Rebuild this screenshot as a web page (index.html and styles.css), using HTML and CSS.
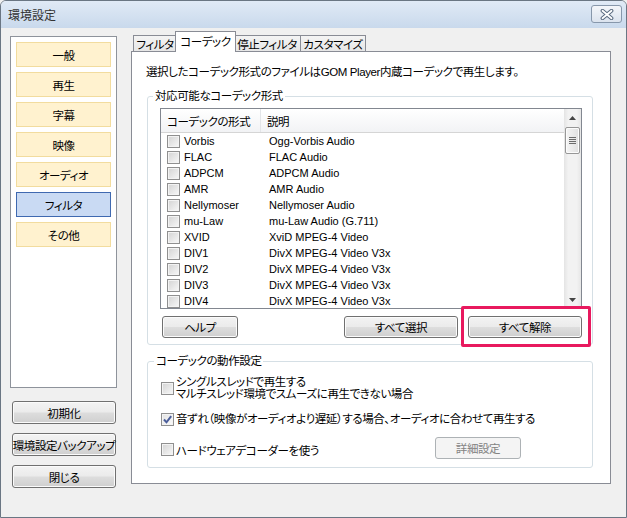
FILE: index.html
```html
<!DOCTYPE html>
<html lang="ja">
<head>
<meta charset="utf-8">
<title>環境設定</title>
<link rel="stylesheet" href="styles.css">
</head>
<body>
<div class="window">
  <div class="titlebar">
    <span class="title">環境設定</span>
    <div class="close">
      <svg width="16" height="11" viewBox="0 0 16 11"><path d="M3.5 1.8 L12.5 9.2 M12.5 1.8 L3.5 9.2" stroke="#5a6b80" stroke-width="3.8" stroke-linecap="round"/><path d="M3.5 1.8 L12.5 9.2 M12.5 1.8 L3.5 9.2" stroke="#ffffff" stroke-width="1.8" stroke-linecap="round"/></svg>
    </div>
  </div>
  <div class="client">
    <div class="side">
      <nav class="navpanel">
        <div class="nav">一般</div>
        <div class="nav">再生</div>
        <div class="nav">字幕</div>
        <div class="nav">映像</div>
        <div class="nav">オーディオ</div>
        <div class="nav nav-active">フィルタ</div>
        <div class="nav">その他</div>
      </nav>
      <div class="sidebtns">
        <div class="btn side-btn">初期化</div>
        <div class="btn side-btn">環境設定バックアップ</div>
        <div class="btn side-btn">閉じる</div>
      </div>
    </div>
    <div class="main">
      <div class="tabs">
        <div class="tab tab-1">フィルタ</div>
        <div class="tab tab-active">コーデック</div>
        <div class="tab tab-3">停止フィルタ</div>
        <div class="tab tab-4">カスタマイズ</div>
      </div>
      <div class="tabpanel">
        <p class="desc">選択したコーデック形式のファイルはGOM Player内蔵コーデックで再生します。</p>
        <fieldset class="group group-codecs">
          <legend>対応可能なコーデック形式</legend>
          <div class="list">
            <div class="list-body">
              <div class="list-head"><div class="col1">コーデックの形式</div><div class="col2">説明</div></div>
              <div class="row"><div class="col1"><span class="cb"></span>Vorbis</div><div class="col2">Ogg-Vorbis Audio</div></div>
              <div class="row"><div class="col1"><span class="cb"></span>FLAC</div><div class="col2">FLAC Audio</div></div>
              <div class="row"><div class="col1"><span class="cb"></span>ADPCM</div><div class="col2">ADPCM Audio</div></div>
              <div class="row"><div class="col1"><span class="cb"></span>AMR</div><div class="col2">AMR Audio</div></div>
              <div class="row"><div class="col1"><span class="cb"></span>Nellymoser</div><div class="col2">Nellymoser Audio</div></div>
              <div class="row"><div class="col1"><span class="cb"></span>mu-Law</div><div class="col2">mu-Law Audio (G.711)</div></div>
              <div class="row"><div class="col1"><span class="cb"></span>XVID</div><div class="col2">XviD MPEG-4 Video</div></div>
              <div class="row"><div class="col1"><span class="cb"></span>DIV1</div><div class="col2">DivX MPEG-4 Video V3x</div></div>
              <div class="row"><div class="col1"><span class="cb"></span>DIV2</div><div class="col2">DivX MPEG-4 Video V3x</div></div>
              <div class="row"><div class="col1"><span class="cb"></span>DIV3</div><div class="col2">DivX MPEG-4 Video V3x</div></div>
              <div class="row"><div class="col1"><span class="cb"></span>DIV4</div><div class="col2">DivX MPEG-4 Video V3x</div></div>
            </div>
            <div class="scrollbar">
              <div class="sb-arrow"><svg width="7" height="4" viewBox="0 0 7 4"><polygon points="0,4 3.5,0 7,4" fill="#444"/></svg></div>
              <div class="sb-thumb"><svg width="7" height="7" viewBox="0 0 7 7"><path d="M0 0.5H7M0 2.5H7M0 4.5H7M0 6.5H7" stroke="#6b6b6b" stroke-width="1"/></svg></div>
              <div class="sb-track"></div>
              <div class="sb-arrow"><svg width="7" height="4" viewBox="0 0 7 4"><polygon points="0,0 7,0 3.5,4" fill="#444"/></svg></div>
            </div>
          </div>
          <div class="list-btns">
            <div class="btn btn-help">ヘルプ</div>
            <div class="btn btn-wide">すべて選択</div>
            <div class="btn btn-wide btn-marked">すべて解除<span class="highlight"></span></div>
          </div>
        </fieldset>
        <fieldset class="group group-opts">
          <legend>コーデックの動作設定</legend>
          <div class="opt opt-multi">
            <span class="cb"></span>
            <span class="opt-text">シングルスレッドで再生する<br>マルチスレッド環境でスムーズに再生できない場合</span>
          </div>
          <div class="opt opt-single">
            <span class="cb cb-checked"><svg width="11" height="11" viewBox="0 0 11 11"><path d="M2 5.5 L4.5 8.3 L9.2 2.2" fill="none" stroke="#4a5d9a" stroke-width="2"/></svg></span>
            <span class="opt-text">音ずれ（映像がオーディオより遅延）する場合、オーディオに合わせて再生する</span>
          </div>
          <div class="opt-row">
            <div class="opt opt-hw">
              <span class="cb"></span>
              <span class="opt-text">ハードウェアデコーダーを使う</span>
            </div>
            <div class="btn btn-disabled">詳細設定</div>
          </div>
        </fieldset>
      </div>
    </div>
  </div>
</div>
</body>
</html>
```

FILE: styles.css
```css
* { box-sizing: border-box; }
html, body { margin: 0; padding: 0; }
body {
  width: 627px;
  height: 518px;
  overflow: hidden;
  background: #f0f0f0;
  font-family: "Liberation Sans", "Noto Sans CJK JP", sans-serif;
  font-size: 11.5px;
  letter-spacing: -0.4px;
  color: #000;
  font-feature-settings: "palt";
  white-space: nowrap;
}
.window {
  width: 627px;
  height: 518px;
  border: 1px solid #6a7683;
  border-radius: 6px 6px 0 0;
  background: #f0f0f0;
  display: flex;
  flex-direction: column;
}
.titlebar {
  height: 27px;
  flex: none;
  display: flex;
  align-items: center;
  justify-content: space-between;
  padding: 0 4px 0 7px;
  border-radius: 5px 5px 0 0;
  background: linear-gradient(#e0eaf6, #c9d9ec);
}
.title { font-size: 12px; letter-spacing: 0; color: #333; }
.close {
  width: 31px;
  height: 18px;
  border: 1px solid #8797ab;
  border-radius: 3px;
  background: linear-gradient(#f3f6fa, #dbe3ee);
  display: flex;
  align-items: center;
  justify-content: center;
  margin-top: -1px;
}
.client {
  flex: 1;
  display: flex;
  gap: 14px;
  padding: 3px 15px 0 9px;
}
.side { width: 107px; padding-top: 5px; display: flex; flex-direction: column; }
.navpanel {
  height: 352px;
  background: #fff;
  border: 1px solid #8e939b;
  padding: 5px 5px;
  display: flex;
  flex-direction: column;
  gap: 5px;
}
.nav {
  height: 25px;
  background: #fff2cf;
  border: 1px solid #f2dc9e;
  display: flex;
  align-items: center;
  justify-content: center;
}
.nav-active { background: #c9daf3; border-color: #3f69b0; }
.sidebtns { margin: 13px 0 0 2px; width: 104px; display: flex; flex-direction: column; gap: 9px; }
.side-btn { height: 23px; }
.btn {
  border: 1px solid #707070;
  border-radius: 3px;
  background: linear-gradient(#f3f3f3 0%, #ebebeb 48%, #dddddd 52%, #cfcfcf 100%);
  box-shadow: inset 0 0 0 1px #fbfbfb;
  display: flex;
  align-items: center;
  justify-content: center;
}
.main { width: 480px; display: flex; flex-direction: column; }
.tabs { height: 20px; display: flex; align-items: flex-end; padding-left: 2px; }
.tab {
  height: 16px;
  border: 1px solid #898c95;
  border-bottom: none;
  margin-left: -1px;
  background: linear-gradient(#f4f4f4, #e6e6e6);
  display: flex;
  align-items: center;
  justify-content: center;
  padding-top: 1px;
}
.tab-1 { width: 44px; margin-left: 0; }
.tab-active {
  width: 61px;
  height: 21px;
  margin: 0 -2px -1px -2px;
  background: #fff;
  position: relative;
  z-index: 1;
  padding-bottom: 4px;
}
.tab-3 { width: 68px; }
.tab-4 { width: 66px; }
.tabpanel {
  height: 433px;
  background: #fff;
  border: 1px solid #898c95;
}
.desc { margin: 13px 0 0 14px; line-height: 14px; }
.group {
  width: 446px;
  margin: 10px 0 0 15px;
  border: 1px solid #d5dfe5;
  border-radius: 3px;
  min-width: 0;
}
.group legend { padding: 0 2px; margin-left: -7px; line-height: 14px; }
.group-codecs { padding: 5px 10px 6px 12px; }
.list {
  height: 201px;
  border: 1px solid #828790;
  display: flex;
  overflow: hidden;
}
.list-body { flex: 1; overflow: hidden; }
.list-head {
  height: 24px;
  display: grid;
  grid-template-columns: 100px 1fr;
  background: linear-gradient(#ffffff, #f2f3f5);
  border-bottom: 1px solid #d5d5d5;
  align-items: center;
}
.list-head .col1 { border-right: 1px solid #e3e5e8; height: 100%; display: flex; align-items: center; padding-left: 6px; }
.list-head .col2 { padding-left: 6px; }
.row {
  height: 16px;
  display: grid;
  grid-template-columns: 100px 1fr;
  align-items: center;
  font-size: 11px;
  letter-spacing: 0;
}
.row .col1 { display: flex; align-items: center; padding-left: 6px; gap: 4px; }
.row .col2 { padding-left: 8px; }
.cb {
  width: 13px;
  height: 13px;
  flex: none;
  border: 1px solid #8f8f8f;
  background: linear-gradient(135deg, #d3d3d3, #f8f8f8);
  box-shadow: inset 0 0 0 1px #f3f3f3;
  display: flex;
  align-items: center;
  justify-content: center;
}
.cb-checked { background: linear-gradient(135deg, #e2e2e2, #fbfbfb); }
.scrollbar {
  width: 17px;
  display: flex;
  flex-direction: column;
  background: linear-gradient(90deg, #e4e4e4, #f2f2f2 25%, #f2f2f2 75%, #e6e6e6);
}
.sb-arrow { height: 17px; display: flex; align-items: center; justify-content: center; }
.sb-thumb {
  height: 27px;
  margin: 1px 1px 0 1px;
  border: 1px solid #979797;
  border-radius: 2px;
  background: linear-gradient(90deg, #f5f5f5, #e0e0e0);
  box-shadow: inset 0 0 0 1px #fcfcfc;
  display: flex;
  align-items: center;
  justify-content: center;
}
.sb-track { flex: 1; }
.list-btns { margin-top: 7px; display: flex; gap: 10px; padding-left: 2px; }
.list-btns .btn { height: 22px; }
.btn-help { width: 76px; margin-right: auto; }
.btn-wide { width: 114px; }
.btn-marked { position: relative; }
.highlight {
  position: absolute;
  left: -8px;
  top: -11px;
  right: -10px;
  bottom: -10px;
  border: 3px solid #e8195e;
  border-radius: 2px;
}
.group-opts { margin-top: 9px; padding: 8px 10px 8px 13px; }
.opt { display: flex; align-items: center; gap: 2px; }
.opt-multi .opt-text { line-height: 12px; }
.opt-single { margin-top: 12px; line-height: 14px; }
.opt-row { margin-top: 11px; display: flex; align-items: center; height: 22px; }
.opt-hw { width: 274px; padding-top: 3px; }
.btn-disabled {
  width: 86px;
  height: 22px;
  border-color: #adb2b5;
  background: #f4f4f4;
  box-shadow: none;
  color: #838383;
}
```
